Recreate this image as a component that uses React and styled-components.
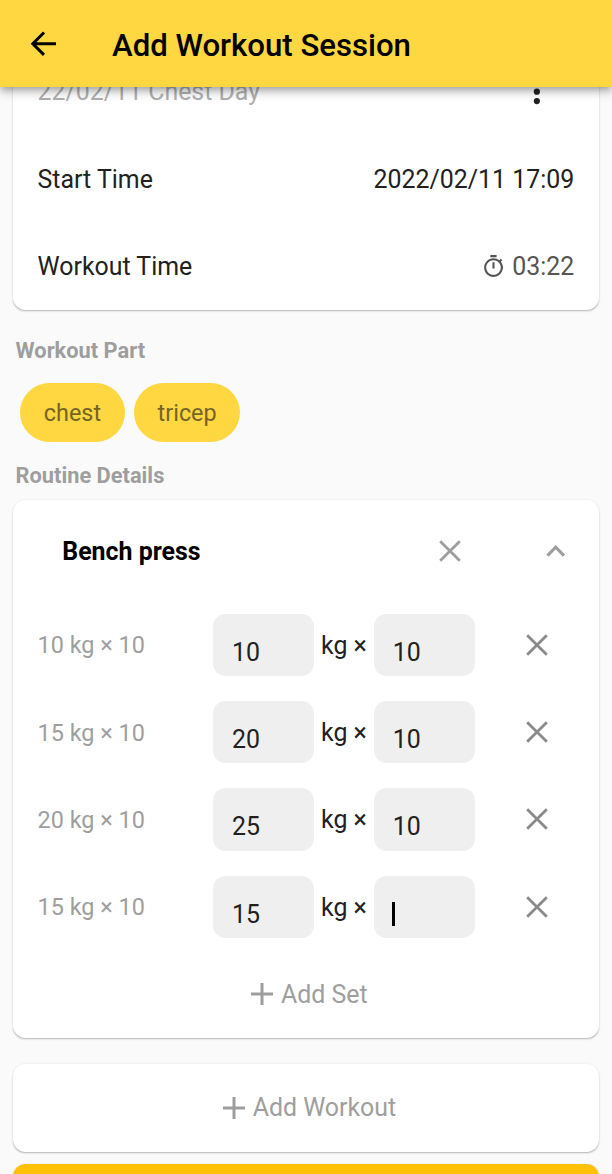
import React from 'react';
import styled, { createGlobalStyle } from 'styled-components';

const Global = createGlobalStyle`
  * { box-sizing: border-box; }
  html, body { margin: 0; padding: 0; background: #fafafa; }
  body { height: 1174px; overflow: hidden; font-family: Roboto, sans-serif; font-size: 24.9px; color: #212121; }
`;

const Screen = styled.div`
  height: 1174px;
  overflow: hidden;
  display: flex;
  flex-direction: column;
`;

const AppBar = styled.header`
  flex: none;
  position: relative;
  z-index: 1;
  height: 87px;
  padding: 0 25px;
  display: flex;
  align-items: center;
  gap: 49.6px;
  background: #ffd740;
  box-shadow: 0 3px 6px -1px rgba(0, 0, 0, 0.2), 0 6px 8px rgba(0, 0, 0, 0.14), 0 1px 15px rgba(0, 0, 0, 0.12);
`;

const Title = styled.h1`
  margin: 4px 0 0;
  font-size: 31.15px;
  line-height: 40px;
  font-weight: 500;
  color: #000;
`;

const Icon = styled.svg`
  display: block;
  flex: none;
`;

const Content = styled.main`
  flex: none;
  margin-top: -39px;
  padding: 0 12.8px 0 12.6px;
  display: flex;
  flex-direction: column;
`;

const Card = styled.section`
  border-radius: 12.5px;
  background: #fff;
  box-shadow: 0 1.5px 1.5px -0.5px rgba(0, 0, 0, 0.22), 0 0.5px 3px rgba(0, 0, 0, 0.08);
`;

const InfoRow = styled.div`
  height: ${(p) => (p.$muted ? 87.7 : 87.2)}px;
  padding: 0 25px;
  display: flex;
  align-items: center;
  justify-content: space-between;
  color: ${(p) => (p.$muted ? '#b0b0b0' : '#212121')};
`;

const MenuButton = styled.span`
  width: 75px;
  display: flex;
  justify-content: center;
`;

const Duration = styled.span`
  display: flex;
  align-items: center;
  gap: 6.5px;
  color: #555;
`;

const SectionTitle = styled.h2`
  margin: ${(p) => p.$top}px 0 0 3px;
  font-size: 21.8px;
  line-height: 26px;
  font-weight: 700;
  color: #9e9e9e;
`;

const Chips = styled.div`
  margin: 19.5px 0 0 7.5px;
  display: flex;
  gap: 9.2px;
`;

const Chip = styled.span`
  height: 59px;
  padding: 0 23.7px;
  display: flex;
  align-items: center;
  border-radius: 30px;
  background: #ffd740;
  color: #746426;
  font-size: 23.4px;
`;

const RoutineCard = styled(Card)`
  margin-top: 11.8px;
`;

const WorkoutHeader = styled.div`
  height: 101px;
  padding: 0 25px 0 49.7px;
  display: flex;
  align-items: center;
  color: #9e9e9e;
`;

const WorkoutName = styled.h3`
  margin: 0;
  padding-top: 1px;
  flex: 1;
  font-size: 24.9px;
  font-weight: 700;
  color: #000;
`;

const ExpandButton = styled.span`
  margin-left: 75px;
`;

const SetRow = styled.div`
  height: 87.25px;
  padding: 0 50.5px 0 25px;
  display: flex;
  align-items: center;
  color: #8a8a8a;
`;

const Previous = styled.span`
  width: 175.4px;
  padding-top: 0.6px;
  font-size: 23.4px;
  color: #9e9e9e;
`;

const Field = styled.span`
  width: 101.2px;
  height: 62.2px;
  padding: 15px 19px 0;
  display: flex;
  align-items: center;
  border-radius: 12.5px;
  background: #efefef;
  color: #212121;
`;

const Caret = styled.span`
  width: 3px;
  height: 24px;
  margin: -1px 0 0 -0.7px;
  background: #000;
`;

const Unit = styled.span`
  width: 59.5px;
  padding-top: 0.8px;
  text-align: center;
  color: #212121;
`;

const RemoveButton = styled.span`
  margin-left: auto;
`;

const AddRow = styled.div`
  height: 88px;
  display: flex;
  align-items: center;
  justify-content: center;
  gap: 8px;
  padding-left: 7px;
  color: #9e9e9e;
`;

const AddCard = styled(Card)`
  margin-top: 25.2px;
`;

const SaveButton = styled.div`
  margin-top: 12px;
  height: 75px;
  border-radius: 12.5px;
  background: #ffc107;
  box-shadow: 0 1px 3px rgba(0, 0, 0, 0.2);
`;

const Cross = () => (
  <Icon width="24" height="24" viewBox="0 0 24 24" fill="none" stroke="currentColor" strokeWidth="2.8">
    <path d="M2.2 2.2L21.8 21.8M21.8 2.2L2.2 21.8" />
  </Icon>
);

const Plus = () => (
  <Icon width="22" height="22" viewBox="0 0 22 22" fill="none" stroke="currentColor" strokeWidth="3">
    <path d="M11 0V22M0 11H22" />
  </Icon>
);

const sets = [
  { previous: '10 kg × 10', weight: '10', reps: '10' },
  { previous: '15 kg × 10', weight: '20', reps: '10' },
  { previous: '20 kg × 10', weight: '25', reps: '10' },
  { previous: '15 kg × 10', weight: '15', reps: null },
];

export default function App() {
  return (
    <Screen>
      <Global />
      <AppBar>
        <Icon width="37.4" height="37.4" viewBox="0 0 24 24" fill="none" stroke="#000" strokeWidth="1.9">
          <path d="M19.9 12H5M12.2 4.8L5 12L12.2 19.2" />
        </Icon>
        <Title>Add Workout Session</Title>
      </AppBar>
      <Content>
        <Card>
          <InfoRow $muted>
            <span>22/02/11 Chest Day</span>
            <MenuButton>
              <Icon width="37.4" height="37.4" viewBox="0 0 24 24" fill="#212121">
                <circle cx="12.1" cy="6" r="2" />
                <circle cx="12.1" cy="12" r="2" />
                <circle cx="12.1" cy="18" r="2" />
              </Icon>
            </MenuButton>
          </InfoRow>
          <InfoRow>
            <span>Start Time</span>
            <span>2022/02/11 17:09</span>
          </InfoRow>
          <InfoRow>
            <span>Workout Time</span>
            <Duration>
              <Icon width="25" height="25" viewBox="0 0 24 24" fill="currentColor">
                <path d="M15 1H9v2h6V1zm-4 13h2V8h-2v6zm8.03-6.61l1.42-1.42c-.43-.51-.9-.99-1.41-1.41l-1.42 1.42A8.962 8.962 0 0 0 12 4c-4.97 0-9 4.03-9 9s4.02 9 9 9a8.994 8.994 0 0 0 7.03-14.61zM12 20c-3.87 0-7-3.13-7-7s3.13-7 7-7 7 3.13 7 7-3.13 7-7 7z" />
              </Icon>
              03:22
            </Duration>
          </InfoRow>
        </Card>

        <SectionTitle $top={27.5}>Workout Part</SectionTitle>
        <Chips>
          <Chip>chest</Chip>
          <Chip>tricep</Chip>
        </Chips>
        <SectionTitle $top={20.5}>Routine Details</SectionTitle>

        <RoutineCard>
          <WorkoutHeader>
            <WorkoutName>Bench press</WorkoutName>
            <Cross />
            <ExpandButton>
              <Icon width="37.4" height="37.4" viewBox="0 0 24 24" fill="none" stroke="currentColor" strokeWidth="2">
                <path d="M6.7 15.1L12 9.8L17.3 15.1" />
              </Icon>
            </ExpandButton>
          </WorkoutHeader>
          {sets.map((set, i) => (
            <SetRow key={i}>
              <Previous>{set.previous}</Previous>
              <Field>{set.weight}</Field>
              <Unit>kg ×</Unit>
              <Field>{set.reps ?? <Caret />}</Field>
              <RemoveButton>
                <Cross />
              </RemoveButton>
            </SetRow>
          ))}
          <AddRow>
            <Plus />
            Add Set
          </AddRow>
        </RoutineCard>

        <AddCard>
          <AddRow>
            <Plus />
            Add Workout
          </AddRow>
        </AddCard>
        <SaveButton />
      </Content>
    </Screen>
  );
}
